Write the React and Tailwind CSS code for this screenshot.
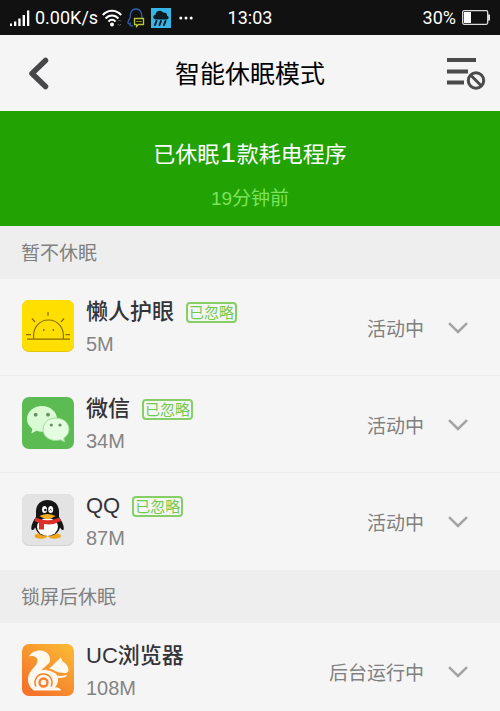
import { useState } from "react";

function SunIcon() {
    return (
        <svg viewBox="0 0 52 52" className="size-[52px] shrink-0" aria-hidden="true">
            <rect width="52" height="52" rx="7" fill="#e3c50c" />
            <rect width="52" height="51" rx="7" fill="#ffdf00" />
            <g stroke="#8a6d00" strokeWidth="1.2" fill="none">
                <path d="M11.7 39C10.4 28 17 20 26.5 20S42.600 28 41.300 39" />
                <path d="M5 39.200H48" />
                <path d="M26 12V16M10 18.500L13 22M42 18.500L39 22M4 34.700H9M43.500 34.700H48" />
            </g>
            <circle cx="21.800" cy="30" r="0.900" fill="#8a6d00" />
            <circle cx="31.300" cy="30" r="0.900" fill="#8a6d00" />
        </svg>
    );
}

function WechatIcon() {
    return (
        <svg viewBox="0 0 52 52" className="size-[52px] shrink-0" aria-hidden="true">
            <rect width="52" height="52" rx="7" fill="#5dbb54" />
            <path
                d="M20 9C11.500 9 5 14.800 5 22C5 26 7 29.500 10.400 31.800L9.300 36.500L14.500 33.800C16.200 34.400 18 34.700 20 34.700C28.500 34.700 35 29 35 22S28.500 9 20 9Z"
                fill="#d8fbd4"
            />
            <path
                d="M34 21C26.600 21 21 26 21 32.400S26.600 43.500 34 43.500C35.600 43.500 37.200 43.300 38.600 42.800L42.500 45L41.800 41.200C45 39.200 47 36 47 32.400C47 26 41.400 21 34 21Z"
                fill="#e4fde0"
                stroke="#9bdc95"
                strokeWidth="1"
            />
            <g fill="#6a8f66">
                <circle cx="13.700" cy="17.700" r="1.900" />
                <circle cx="26" cy="17.700" r="1.900" />
                <circle cx="29.300" cy="28" r="1.600" />
                <circle cx="38" cy="28" r="1.600" />
            </g>
        </svg>
    );
}

function QQIcon() {
    return (
        <svg viewBox="0 0 52 52" className="size-[52px] shrink-0" aria-hidden="true">
            <rect width="52" height="52" rx="7" fill="#d2d2d2" />
            <rect width="52" height="51" rx="7" fill="#e3e3e3" />
            <ellipse cx="19" cy="42" rx="6.500" ry="2.800" fill="#f2a31d" />
            <ellipse cx="32.500" cy="42" rx="6.500" ry="2.800" fill="#f2a31d" />
            <path
                d="M25.500 6C18.500 6 14 11 14 17.500V23C11.500 26.500 9 31 9.300 34.500C9.500 37 11.500 36.500 13.300 33.500C14.500 38.500 19 42 25.500 42S36.800 38.500 38 33.500C39.800 36.500 41.600 37 41.800 34.500C42 31 39.500 26.500 37 23V17.500C37 11 32.500 6 25.500 6Z"
                fill="#161616"
            />
            <ellipse cx="25.500" cy="33" rx="10.500" ry="9" fill="#fff" />
            <path d="M13.500 23.500Q25.500 29 37.500 23.500L39 27Q31 31.500 22 30V35.500H17V28.800Q14.500 28 12.500 27Z" fill="#dc2f2a" />
            <ellipse cx="22.500" cy="15.500" rx="2.500" ry="3.500" fill="#fff" />
            <ellipse cx="28.700" cy="15.500" rx="2.500" ry="3.500" fill="#fff" />
            <circle cx="23.300" cy="16" r="1.200" fill="#161616" />
            <path d="M27.500 16.500Q28.600 14.500 29.700 16.500" stroke="#161616" strokeWidth="0.900" fill="none" />
            <path d="M17.500 22Q25.500 18 33.500 22Q25.500 28 17.500 22Z" fill="#f7ad1c" />
        </svg>
    );
}

function UCIcon() {
    return (
        <svg viewBox="0 0 52 52" className="size-[52px] shrink-0" aria-hidden="true">
            <defs>
                <linearGradient id="uc-bg" x1="1" y1="0" x2="0.300" y2="1">
                    <stop offset="0" stopColor="#fbbd35" />
                    <stop offset="1" stopColor="#f4742a" />
                </linearGradient>
            </defs>
            <rect width="52" height="52" rx="7" fill="url(#uc-bg)" />
            {/* tail and body */}
            <path
                d="M7 12.500C9 8.500 13.500 6.300 18.500 6.500C24.500 6.800 28.500 11 28 16.500C27.600 20.500 22 22.500 19.500 26.500C28 23.500 35 28.500 36 34C36.500 38 35 41 33 43.300C36 43.300 38.500 44.500 39 46.500H12C8 44 6 39.500 6 35C6 26.500 15.500 22.500 15.500 16.500C15.500 13 11 11.300 7 12.500Z"
                fill="#fff8ee"
            />
            {/* head */}
            <path
                d="M38.300 13.500C37.500 15.500 35.500 16.500 33.500 18.500C31.500 20.500 29.500 23 27 24.500C31 25 34 28 37.500 28.500C41 29 46 30 46.500 26.500C46.500 22.500 44 19 40.500 17.500C40.300 16 39.500 14.500 38.300 13.500Z"
                fill="#fff8ee"
            />
            <path d="M24.500 25.500C30 25.500 33 29.500 38.500 30.500" stroke="#f6922f" strokeWidth="1.300" fill="none" />
            <path d="M35 31.500C39 32.500 42 31.500 45.500 30.800C44 33.500 40 34.500 36 34Z" fill="#fff8ee" />
            <path d="M14 42.500A8.500 8.500 0 1 1 29 42.500" fill="none" stroke="#f58030" strokeWidth="1.500" />
            <circle cx="21.500" cy="38.500" r="4" fill="none" stroke="#f58030" strokeWidth="2.400" />
        </svg>
    );
}

const sections = [
    {
        title: "暂不休眠",
        apps: [
            { name: "懒人护眼", size: "5M", status: "活动中", ignored: true, icon: SunIcon },
            { name: "微信", size: "34M", status: "活动中", ignored: true, icon: WechatIcon },
            { name: "QQ", size: "87M", status: "活动中", ignored: true, icon: QQIcon },
        ],
    },
    {
        title: "锁屏后休眠",
        apps: [
            { name: "UC浏览器", size: "108M", status: "后台运行中", ignored: false, icon: UCIcon },
        ],
    },
];

function StatusBar() {
    return (
        <div className="grid h-[35px] shrink-0 grid-cols-[1fr_auto_1fr] items-center bg-[#111111] px-[10px] font-[Roboto,sans-serif] text-lg text-white">
            <div className="flex items-center">
                <svg viewBox="0 0 20 16" className="mr-[5px] h-4 w-5" fill="#fff" aria-hidden="true">
                    <path d="M0 13.500H2V16H0ZM4 11.500H6.300V16H4ZM8.300 8.500H10.600V16H8.300ZM12.600 5H15V16H12.600ZM17 0.500H19.300V16H17Z" />
                </svg>
                <span>0.00K/s</span>
                <svg viewBox="0 0 20 18" className="ml-1 h-[18px] w-5" fill="none" stroke="#fff" strokeWidth="2" aria-hidden="true">
                    <path d="M0.800 6C6 0.300 14 0.300 19.200 6" />
                    <path d="M3.600 9.500C7 5.500 13 5.500 16.400 9.500" />
                    <path d="M6.500 12.600C8.500 10.200 11.500 10.200 13.500 12.600" />
                    <circle cx="10" cy="15.500" r="2" fill="#fff" stroke="none" />
                    <path d="M16 12.500L17.500 11L19 12.500M16 15L17.500 16.500L19 15" stroke="#666" strokeWidth="1" />
                </svg>
                <svg viewBox="0 0 18 20" className="ml-[5px] h-5 w-[18px]" fill="none" aria-hidden="true">
                    <path
                        d="M6 17.500C4.500 18.500 2.500 17.800 3.200 15.500C1.500 16.500 0.500 15.500 1.200 13.500C1.600 12 2.500 11 3.200 9.500C3 4 5 1 9 1C13 1 15 4 14.800 9L15.500 10"
                        stroke="#2f62b5"
                        strokeWidth="1.300"
                    />
                    <path d="M7.500 10.500H16.500V16.500H11.500L9.500 18.500V16.500H7.500Z" stroke="#b9c832" strokeWidth="1.300" />
                    <path d="M9.500 13.500H14.500" stroke="#b9c832" strokeWidth="1.200" strokeDasharray="1.200 0.700" />
                </svg>
                <svg viewBox="0 0 20 20" className="ml-[6px] size-5" aria-hidden="true">
                    <rect width="20" height="20" fill="#36b5e6" />
                    <path
                        d="M5 11.500C1.500 11.500 1.300 7.300 4.500 6.800C4.800 3 9.500 1.300 12 4.500C15 4 16.500 6 16 7.800C18.500 8.500 18 11.500 15.500 11.500Z"
                        fill="#0c1a22"
                    />
                    <path
                        d="M5.500 13L4 17M10 13L8.500 17M14.500 13L13 17"
                        stroke="#0c1a22"
                        strokeWidth="2"
                        strokeLinecap="round"
                    />
                </svg>
                <svg viewBox="0 0 14 4" className="ml-2 h-1 w-[14px]" fill="#fff" aria-hidden="true">
                    <circle cx="1.800" cy="2" r="1.500" />
                    <circle cx="7" cy="2" r="1.500" />
                    <circle cx="12.200" cy="2" r="1.500" />
                </svg>
            </div>
            <span>13:03</span>
            <div className="flex items-center justify-end gap-[6px]">
                <span>30%</span>
                <svg viewBox="0 0 28 15" className="h-[15px] w-7" aria-hidden="true">
                    <rect x="0.700" y="0.700" width="25" height="13.600" rx="1.500" fill="none" stroke="#ddd" strokeWidth="1.300" />
                    <rect x="2" y="2" width="7" height="11" fill="#fff" />
                    <path d="M26 4.500H28V10.500H26Z" fill="#ddd" />
                </svg>
            </div>
        </div>
    );
}

function AppRow({ app }) {
    const [open, setOpen] = useState(false);
    const Icon = app.icon;

    return (
        <li className="flex h-[97px] items-center border-b border-[#ebebeb] pr-8 pb-[2px] pl-[22px] last:border-transparent">
            <Icon />
            <div className="ml-3 flex-1 pt-1">
                <div className="flex items-center">
                    <h3 className="text-[22px] leading-8 font-medium text-[#333338]">{app.name}</h3>
                    {app.ignored && (
                        <span className="ml-3 rounded border-2 border-[#86cf66] px-[1px] text-[15px] leading-[17px] text-[#72c94c]">
                            已忽略
                        </span>
                    )}
                </div>
                <p className="text-xl leading-8 text-[#848484]">{app.size}</p>
            </div>
            <span className="pt-2 text-[19px] text-[#808080]">{app.status}</span>
            <button
                type="button"
                aria-label={app.name}
                aria-expanded={open}
                onClick={() => setOpen(!open)}
                className="ml-6 cursor-pointer pt-1"
            >
                <svg viewBox="0 0 20 12" className="h-3 w-5" fill="none" stroke="#a3a3a3" strokeWidth="2.500" aria-hidden="true">
                    <path d="M1 1.200L10 10L19 1.200" />
                </svg>
            </button>
        </li>
    );
}

export default function App() {
    return (
        <div className="flex h-screen flex-col bg-[#f5f5f5] font-['Liberation_Sans','Noto_Sans_CJK_SC',sans-serif]">
            <StatusBar />
            <header className="grid h-[76px] shrink-0 grid-cols-[1fr_auto_1fr] items-center px-[14px]">
                <button type="button" aria-label="返回" className="ml-[14px] cursor-pointer justify-self-start">
                    <svg viewBox="0 0 21 33" className="h-[33px] w-[21px]" fill="none" stroke="#47474a" strokeWidth="5.500" strokeLinecap="round" strokeLinejoin="round" aria-hidden="true">
                        <path d="M17.500 3.500L4 16.500L17.500 29.500" />
                    </svg>
                </button>
                <h1 className="pt-1 text-[25px] text-black">智能休眠模式</h1>
                <button type="button" aria-label="忽略名单" className="cursor-pointer justify-self-end">
                    <svg viewBox="0 0 39 34" className="h-[34px] w-[39px]" fill="none" stroke="#4a4a4a" aria-hidden="true">
                        <path d="M0 4H29M0 15.500H21M0 26.500H17" strokeWidth="4" />
                        <circle cx="29" cy="24.500" r="10.500" fill="#f5f5f5" stroke="none" />
                        <circle cx="29" cy="24.500" r="7.700" strokeWidth="3" />
                        <path d="M23.800 19.300L34.200 29.700" strokeWidth="3" />
                    </svg>
                </button>
            </header>
            <main className="flex-1 overflow-y-auto [scrollbar-width:none]">
                <div className="flex h-[115px] flex-col items-center bg-[#22a203] pt-[22px]">
                    <p className="text-[22px] leading-10 text-white">
                        已休眠<span className="mx-px text-[28px]">1</span>款耗电程序
                    </p>
                    <p className="text-[19px] leading-[48px] text-[#7be35f]">19分钟前</p>
                </div>
                {sections.map((section) => (
                    <section key={section.title}>
                        <h2 className="flex h-[53px] items-center bg-[#eeeeee] px-[21px] pt-1 text-[19px] text-[#808080]">
                            {section.title}
                        </h2>
                        <ul>
                            {section.apps.map((app) => (
                                <AppRow key={app.name} app={app} />
                            ))}
                        </ul>
                    </section>
                ))}
            </main>
        </div>
    );
}
